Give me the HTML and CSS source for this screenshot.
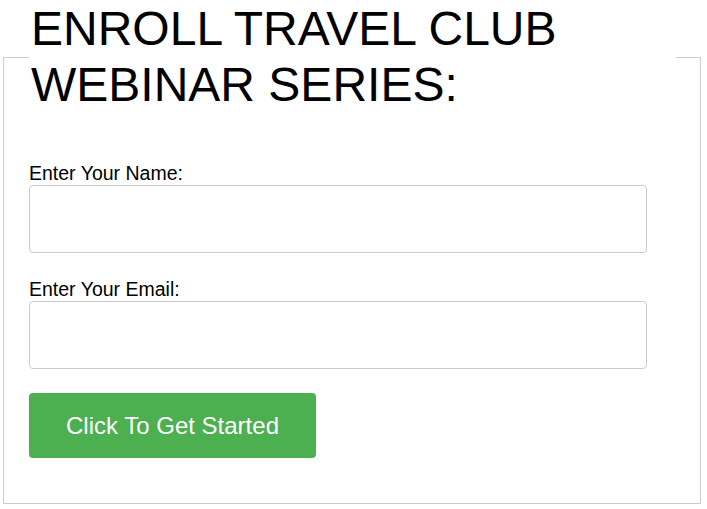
FILE: index.html
```html
<!DOCTYPE html>
<html lang="en">

<head>
    <meta charset="utf-8">
    <meta name="viewport" content="width=device-width, initial-scale=1">
    <title>Enroll Travel Club Webinar Series</title>
    <link rel="stylesheet" href="styles.css">
</head>

<body>
    <form class="signup" action="#">
        <fieldset class="signup-box">
            <legend class="signup-title">ENROLL TRAVEL CLUB WEBINAR SERIES:</legend>

            <div class="field">
                <label for="name">Enter Your Name:</label>
                <input id="name" type="text" name="name">
            </div>

            <div class="field">
                <label for="email">Enter Your Email:</label>
                <input id="email" type="email" name="email">
            </div>

            <button class="start" type="submit">Click To Get Started</button>
        </fieldset>
    </form>
</body>

</html>
```

FILE: styles.css
```css
html {
    font-size: medium;
}

body {
    margin: 0;
    font-family: "Liberation Sans", Arial, sans-serif;
    color: #000;
    background-color: #fff;
}

.signup-box {
    margin: 1px 6px 0 3px;
    padding: 0 24px 45px 25px;
    border: 1px solid #ccc;
    min-width: 0;
}

.signup-title {
    padding: 0 3px 0 2px;
    font-size: 48px;
    line-height: 56px;
    font-weight: normal;
}

.field {
    margin-top: 25px;
}

.field:first-of-type {
    margin-top: 49px;
}

.field label {
    display: block;
    font-size: 19.5px;
    line-height: 23px;
}

.field input {
    display: block;
    box-sizing: border-box;
    width: 95.5%;
    height: 68px;
    margin: 0;
    padding: 0 14px;
    border: 1px solid #ccc;
    border-radius: 4px;
    font-family: inherit;
    font-size: 18px;
}

.start {
    display: block;
    margin-top: 24px;
    padding: 18px 37px;
    border: none;
    border-radius: 4px;
    background-color: #4caf50;
    color: #fff;
    font-family: inherit;
    font-size: 24px;
    line-height: 29px;
    cursor: pointer;
}
```
